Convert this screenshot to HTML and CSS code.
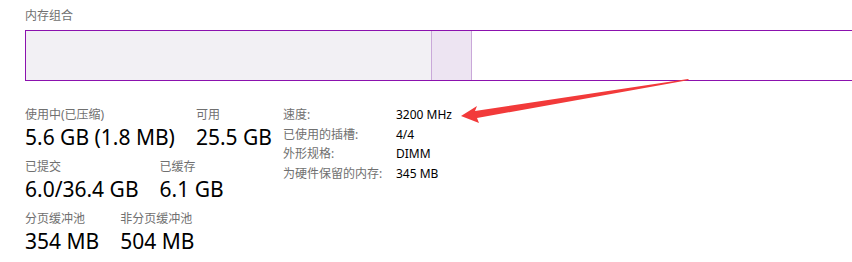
FILE: index.html
```html
<!DOCTYPE html>
<html lang="zh-CN">
<head>
    <meta charset="UTF-8">
    <title>内存组合</title>
    <link rel="stylesheet" href="styles.css">
</head>
<body>
    <div class="title">内存组合</div>

    <div class="bar">
        <div class="seg used"></div>
        <div class="seg modified"></div>
        <div class="seg free"></div>
    </div>

    <div class="details">
        <div class="stats">
            <div class="row">
                <div class="stat">
                    <div class="label">使用中(已压缩)</div>
                    <div class="value">5.6 GB (1.8 MB)</div>
                </div>
                <div class="stat">
                    <div class="label">可用</div>
                    <div class="value">25.5 GB</div>
                </div>
            </div>
            <div class="row">
                <div class="stat">
                    <div class="label">已提交</div>
                    <div class="value">6.0/36.4 GB</div>
                </div>
                <div class="stat">
                    <div class="label">已缓存</div>
                    <div class="value">6.1 GB</div>
                </div>
            </div>
            <div class="row">
                <div class="stat">
                    <div class="label">分页缓冲池</div>
                    <div class="value">354 MB</div>
                </div>
                <div class="stat">
                    <div class="label">非分页缓冲池</div>
                    <div class="value">504 MB</div>
                </div>
            </div>
        </div>

        <table class="props">
            <tr><td>速度:</td><td>3200 MHz</td></tr>
            <tr><td>已使用的插槽:</td><td>4/4</td></tr>
            <tr><td>外形规格:</td><td>DIMM</td></tr>
            <tr><td>为硬件保留的内存:</td><td>345 MB</td></tr>
        </table>
    </div>

    <!-- 标注箭头 -->
    <svg class="arrow" width="852" height="262" viewBox="0 0 852 262">
        <polygon points="461,116 477,106 475,111 688,79 689,80 477,118 479,123" fill="#f23a3a"/>
    </svg>
</body>
</html>
```

FILE: styles.css
```css
body {
    margin: 0;
    padding: 8px 0 0 25px;
    font-family: "Noto Sans", "Noto Sans CJK SC", sans-serif;
    background-color: #fff;
    color: #000;
    overflow: hidden;
    position: relative;
    height: 262px;
    box-sizing: border-box;
}

.title {
    font-size: 12px;
    line-height: 16px;
    color: #707070;
    margin-bottom: 6px;
}

.bar {
    display: flex;
    height: 49px;
    width: 827px;
    border: 1px solid #8b12ae;
    border-right: none;
}

.seg {
    height: 100%;
}

.used {
    width: 405px;
    background-color: #f2f0f4;
    border-right: 1px solid #c9a8d9;
}

.modified {
    width: 39px;
    background-color: #ede4f2;
    border-right: 1px solid #c9a8d9;
}

.free {
    flex: 1;
    background-color: #fff;
}

.details {
    display: flex;
    align-items: flex-start;
    margin-top: 26px;
}

.stats {
    width: 258px;
    display: flex;
    flex-direction: column;
    gap: 9px;
}

.row {
    display: flex;
    gap: 21px;
}

.label {
    font-size: 12px;
    line-height: 16px;
    color: #707070;
}

.value {
    font-size: 21px;
    line-height: 26px;
    margin-top: 1px;
}

.props {
    border-collapse: collapse;
    margin-top: -2px;
    font-size: 12px;
}

.props td {
    padding: 0;
    height: 19.6px;
    line-height: 19.6px;
    vertical-align: middle;
}

.props td:first-child {
    width: 113px;
    color: #707070;
}

.arrow {
    position: absolute;
    top: 0;
    left: 0;
    pointer-events: none;
}
```
